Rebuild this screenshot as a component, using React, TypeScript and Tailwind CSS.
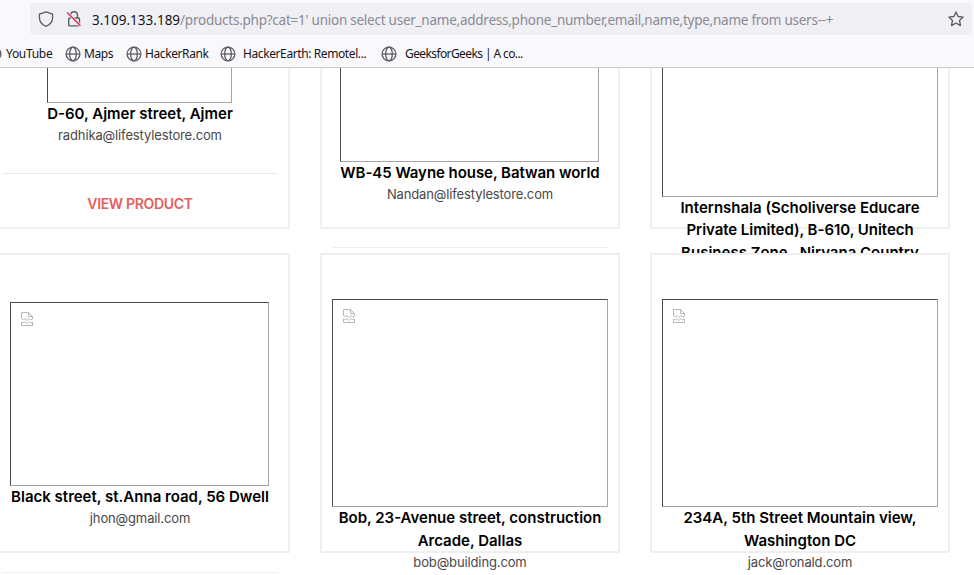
import type { ReactNode } from "react";

function Globe({ className = "" }: { className?: string }) {
  return (
    <svg className={`size-4 shrink-0 ${className}`} viewBox="0 0 16 16" fill="none" stroke="#5b5b66" strokeWidth="1.3">
      <circle cx="8" cy="8" r="6.9" />
      <ellipse cx="8" cy="8" rx="3.3" ry="6.9" />
      <path d="M1.2 8h13.6" />
    </svg>
  );
}

function BrokenImage() {
  return (
    <svg className="ml-[10px] mt-[9px] h-[14px] w-3" viewBox="0 0 12 14" fill="none" stroke="#b0b0b0" strokeWidth="0.9">
      <path d="M.5 6.5V.5H7.5L11.5 4.5V7M7.5.5V4.5H11.5" />
      <path d="M.5 6.5L2.5 8L4 6.5L6 8.5L8 6.5L9.5 8L11.5 7" />
      <path d="M.5 10V13.5H11.5V10L9.5 11L8 9.5L6 11.5L4 9.5L2.5 11Z" />
    </svg>
  );
}

function Title({ children, className = "" }: { children: ReactNode; className?: string }) {
  return <div className={`whitespace-nowrap text-[15px] font-semibold text-black ${className}`}>{children}</div>;
}

function Email({ children, className = "" }: { children: ReactNode; className?: string }) {
  return (
    <div className={`whitespace-nowrap text-[13px] leading-[21px] tracking-[-0.13px] text-[#484848] ${className}`}>{children}</div>
  );
}

const frame = "shrink-0 border border-t-[#4a4a4f] border-l-[#4a4a4f] border-r-[#a5a5a5] border-b-[#a5a5a5]";
const cutFrame = "shrink-0 border border-t-0 border-l-[#4a4a4f] border-r-[#a5a5a5] border-b-[#a5a5a5]";
const topCard = "flex h-[161px] w-[300px] shrink-0 flex-col items-center border-2 border-t-0 border-[#efefef]";
const card = "flex h-[300px] w-[300px] shrink-0 flex-col items-center border-2 border-[#efefef] bg-white";

export default function App() {
  return (
    <div className="flex h-[575px] w-[974px] flex-col overflow-hidden bg-white font-['Inter',sans-serif]">
      <header className="h-[68px] shrink-0 border-b border-[#cccccc] bg-[#f9f9fb] pt-[3px] font-['Noto_Sans',sans-serif]">
        <div className="ml-[30px] mr-[2px] flex h-8 items-center rounded bg-[#f0f0f4] pl-2 pr-2">
          <svg className="size-4 shrink-0" viewBox="0 0 16 16" fill="none" stroke="#5b5b66" strokeWidth="1.3" strokeLinejoin="round">
            <path d="M8 .8L14.6 3.2V6.3C14.6 10.4 11.8 14 8 15.3C4.2 14 1.4 10.4 1.4 6.3V3.2Z" />
          </svg>
          <svg className="ml-3 size-4 shrink-0" viewBox="0 0 16 16" fill="none" stroke="#5b5b66" strokeWidth="1.4">
            <path d="M4.7 7V4.2a3.4 3.4 0 0 1 6.8 0V7" />
            <rect x="2.7" y="7" width="10.8" height="7.9" rx="1.2" />
            <path d="M1.2 1.5L14.5 14.8" stroke="#f0f0f4" strokeWidth="3" />
            <path d="M1.2 1.5L14.5 14.8" stroke="#e22850" />
          </svg>
          <div className="ml-[10px] whitespace-pre pt-[2px] text-[13.5px] text-[#8a8a93]">
            <span className="text-[#15141a]">3.109.133.189</span>
            <span className="tracking-[-0.245px]">/products.php?cat=1' union select user_name,address,phone_number,email,name,type,name from users--+</span>
          </div>
          <svg className="ml-auto size-4 shrink-0" viewBox="0 0 16 16" fill="none" stroke="#5b5b66" strokeWidth="1.3" strokeLinejoin="round">
            <path d="M8 1L10.1 5.5L15.2 6.1L11.5 9.5L12.5 14.6L8 12L3.5 14.6L4.5 9.5L.8 6.1L5.9 5.5Z" />
          </svg>
        </div>
        <nav className="mt-px flex h-9 items-center whitespace-nowrap text-[12px] tracking-[-0.4px] text-[#15141a]">
          <Globe className="-ml-[14px]" />
          <span className="ml-1 w-[47px] tracking-[-0.3px]">YouTube</span>
          <Globe className="ml-3" />
          <span className="ml-[3px] w-[30px]">Maps</span>
          <Globe className="ml-3" />
          <span className="ml-[3px] w-[64px]">HackerRank</span>
          <Globe className="ml-[11px]" />
          <span className="ml-[7px] w-[124px]">HackerEarth: Remotel...</span>
          <Globe className="ml-[14px]" />
          <span className="ml-2 tracking-[-0.6px]">GeeksforGeeks | A co...</span>
        </nav>
      </header>

      <main className="flex flex-col">
        <section className="-ml-[10px] flex h-[185px] gap-[30px]">
          <article className={topCard}>
            <div className={`${cutFrame} mr-px h-[35px] w-[185px]`} />
            <Title className="leading-[22px]">D-60, Ajmer street, Ajmer</Title>
            <Email>radhika@lifestylestore.com</Email>
            <div className="mt-[27px] h-px w-[276px] shrink-0 bg-[#ebebeb]" />
            <a className="mt-[19px] text-[14px] font-semibold leading-[22px] tracking-[-0.32px] text-[#e4605e]">VIEW PRODUCT</a>
          </article>
          <article className={topCard}>
            <div className={`${cutFrame} mr-px h-[94px] w-[259px]`} />
            <Title className="leading-[22px] tracking-[-0.05px]">WB-45 Wayne house, Batwan world</Title>
            <Email>Nandan@lifestylestore.com</Email>
            <div className="mt-[42px] h-px w-[276px] shrink-0 bg-[#f0f0f0]" />
          </article>
          <article className={topCard}>
            <div className={`${cutFrame} h-[129px] w-[276px]`} />
            <Title className="leading-[22px]">Internshala (Scholiverse Educare</Title>
            <Title className="leading-[22px] tracking-[-0.05px]">Private Limited), B-610, Unitech</Title>
            <Title className="leading-[23px]">Business Zone , Nirvana Country</Title>
          </article>
        </section>

        <section className="relative -ml-[10px] flex gap-[30px]">
          <article className={card}>
            <div className={`${frame} mr-px mt-[47px] h-[184px] w-[259px]`}>
              <BrokenImage />
            </div>
            <Title className="leading-[22px]">Black street, st.Anna road, 56 Dwell</Title>
            <Email>jhon@gmail.com</Email>
            <div className="mt-[43px] h-px w-[276px] shrink-0 bg-[#f0f0f0]" />
          </article>
          <article className={card}>
            <div className={`${frame} mt-[44px] h-[208px] w-[276px]`}>
              <BrokenImage />
            </div>
            <Title className="-mt-px leading-[23px]">Bob, 23-Avenue street, construction</Title>
            <Title className="leading-[23px]">Arcade, Dallas</Title>
            <Email>bob@building.com</Email>
          </article>
          <article className={card}>
            <div className={`${frame} mt-[44px] h-[208px] w-[276px]`}>
              <BrokenImage />
            </div>
            <Title className="-mt-px leading-[23px]">234A, 5th Street Mountain view,</Title>
            <Title className="leading-[23px]">Washington DC</Title>
            <Email>jack@ronald.com</Email>
          </article>
        </section>
      </main>
    </div>
  );
}
